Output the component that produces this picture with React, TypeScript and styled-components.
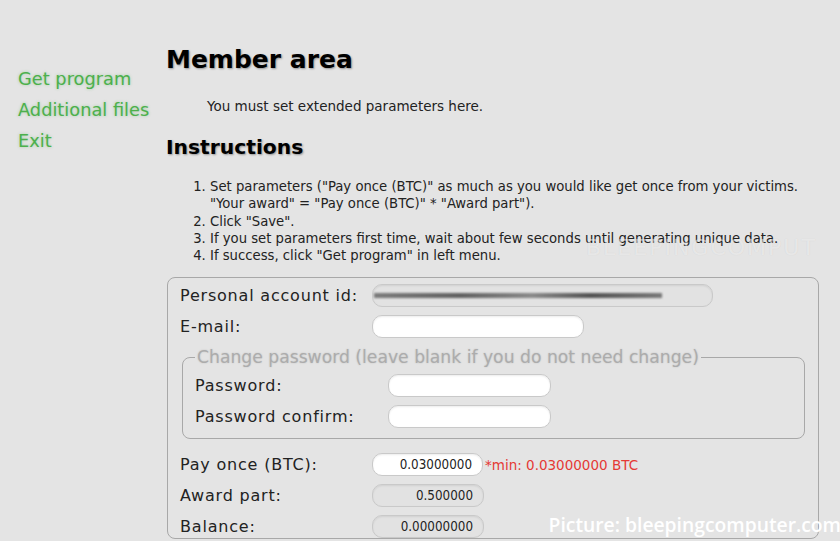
import styled, { createGlobalStyle } from 'styled-components';

const GlobalStyle = createGlobalStyle`
  html, body {
    margin: 0;
    padding: 0;
    background: #e4e4e4;
  }
  body {
    font-family: "DejaVu Sans Condensed", "DejaVu Sans", sans-serif;
    color: #222;
    width: 840px;
    height: 541px;
    overflow: hidden;
  }
`;

const Page = styled.div`
  position: relative;
  display: flex;
  width: 840px;
  height: 541px;
  overflow: hidden;
`;

const Sidebar = styled.nav`
  width: 166px;
  flex: none;
  padding: 63px 0 0 18px;
  box-sizing: border-box;
  display: flex;
  flex-direction: column;
`;

const MenuLink = styled.a`
  font-family: "DejaVu Sans", sans-serif;
  font-size: 17.8px;
  line-height: 31px;
  color: #4cb04c;
  text-decoration: none;
  text-shadow: 0 0 3px rgba(80, 170, 80, 0.45);
  white-space: nowrap;
`;

const Main = styled.main`
  flex: 1;
  padding-top: 42px;
`;

const Title = styled.h1`
  margin: 0;
  font-family: "DejaVu Sans", sans-serif;
  font-size: 25px;
  line-height: 36px;
  font-weight: bold;
  color: #000;
  text-shadow: 1px 1px 2px rgba(0, 0, 0, 0.35);
`;

const Notice = styled.p`
  margin: 19px 0 0 41px;
  font-family: "DejaVu Sans", sans-serif;
  font-size: 13.5px;
  line-height: 18px;
  color: #222;
`;

const Subtitle = styled.h2`
  margin: 18px 0 0;
  font-family: "DejaVu Sans", sans-serif;
  font-size: 20.3px;
  line-height: 28px;
  font-weight: bold;
  color: #000;
  text-shadow: 1px 1px 2px rgba(0, 0, 0, 0.35);
`;

const Steps = styled.ol`
  margin: 16px 0 0;
  padding-left: 44px;
  font-size: 14.7px;
  line-height: 17.3px;
  color: #222;
  width: 640px;
`;

const Form = styled.fieldset`
  margin: 14px 0 0 1px;
  width: 652px;
  box-sizing: border-box;
  border: 1px solid #a8a8a8;
  border-radius: 8px;
  padding: 6px 12px 0;
  display: flex;
  flex-direction: column;
  gap: 8px;
`;

const Row = styled.div<{ $col?: number }>`
  display: grid;
  grid-template-columns: ${(p) => p.$col || 192}px 1fr;
  height: 23px;
  align-items: center;
`;

const InnerSet = styled.fieldset`
  margin: 1px 1px 6px 2px;
  min-width: 0;
  border: 1px solid #a8a8a8;
  border-radius: 8px;
  padding: 7px 12px 10px;
  display: flex;
  flex-direction: column;
  gap: 8px;
`;

const Legend = styled.legend`
  padding: 0 2px;
  font-family: "DejaVu Sans", sans-serif;
  font-size: 17.2px;
  line-height: 20px;
  color: #acacac;
  text-shadow: 0 0 2px rgba(0, 0, 0, 0.15);
  white-space: nowrap;
`;

const Label = styled.label`
  font-family: "DejaVu Sans", sans-serif;
  font-size: 16px;
  letter-spacing: 0.8px;
  color: #222;
  white-space: nowrap;
`;

const Field = styled.div`
  display: flex;
  align-items: center;
  gap: 2px;
`;

const Box = styled.div<{ $w: number; $readonly?: boolean; $align?: string }>`
  position: relative;
  flex: none;
  width: ${(p) => p.$w}px;
  height: 23px;
  box-sizing: border-box;
  border: 1px solid #c9c9c9;
  border-radius: 10px;
  background: ${(p) => (p.$readonly ? '#e2e2e2' : '#fff')};
  box-shadow: inset 0 1px 2px rgba(0, 0, 0, 0.08);
  display: flex;
  align-items: center;
  justify-content: ${(p) => p.$align || 'flex-start'};
  padding: 0 10px;
  font-size: 13.3px;
  color: #222;
  overflow: hidden;
`;

const Smudge = styled.span`
  display: block;
  flex: none;
  width: 288px;
  height: 5px;
  margin-left: -9px;
  background: linear-gradient(90deg, #6a6a6a, #4a4a4a 30%, #7a7a7a 55%, #3a3a3a 75%, #666);
  filter: blur(1.2px);
  opacity: 0.85;
`;

const Hint = styled.span`
  font-family: "DejaVu Sans", sans-serif;
  font-size: 13.5px;
  color: #e53935;
  white-space: nowrap;
`;

const Watermark = styled.div`
  position: absolute;
  right: -1px;
  bottom: 3px;
  font-family: "Open Sans", sans-serif;
  font-weight: 600;
  font-size: 19.3px;
  color: #fff;
  white-space: nowrap;
`;

const FaintMark = styled.div`
  position: absolute;
  left: 586px;
  top: 236px;
  font-family: "DejaVu Sans", sans-serif;
  font-size: 22px;
  line-height: 24px;
  letter-spacing: 2px;
  color: rgba(255, 255, 255, 0.5);
  text-shadow: 0 0 1px rgba(0, 0, 0, 0.1);
  white-space: nowrap;
`;

export default function App() {
  return (
    <>
      <GlobalStyle />
      <Page>
        <Sidebar>
          <MenuLink href="#">Get program</MenuLink>
          <MenuLink href="#">Additional files</MenuLink>
          <MenuLink href="#">Exit</MenuLink>
        </Sidebar>
        <Main>
          <Title>Member area</Title>
          <Notice>You must set extended parameters here.</Notice>
          <Subtitle>Instructions</Subtitle>
          <Steps>
            <li>
              Set parameters ("Pay once (BTC)" as much as you would like get once from your victims.
              <br />
              "Your award" = "Pay once (BTC)" * "Award part").
            </li>
            <li>Click "Save".</li>
            <li>If you set parameters first time, wait about few seconds until generating unique data.</li>
            <li>If success, click "Get program" in left menu.</li>
          </Steps>
          <Form>
            <Row>
              <Label>Personal account id:</Label>
              <Field>
                <Box $w={341} $readonly>
                  <Smudge />
                </Box>
              </Field>
            </Row>
            <Row>
              <Label>E-mail:</Label>
              <Field>
                <Box $w={212} />
              </Field>
            </Row>
            <InnerSet>
              <Legend>Change password (leave blank if you do not need change)</Legend>
              <Row $col={193}>
                <Label>Password:</Label>
                <Field>
                  <Box $w={163} />
                </Field>
              </Row>
              <Row $col={193}>
                <Label>Password confirm:</Label>
                <Field>
                  <Box $w={163} />
                </Field>
              </Row>
            </InnerSet>
            <Row>
              <Label>Pay once (BTC):</Label>
              <Field>
                <Box $w={111} $align="flex-end">0.03000000</Box>
                <Hint>*min: 0.03000000 BTC</Hint>
              </Field>
            </Row>
            <Row>
              <Label>Award part:</Label>
              <Field>
                <Box $w={112} $readonly $align="flex-end">0.500000</Box>
              </Field>
            </Row>
            <Row>
              <Label>Balance:</Label>
              <Field>
                <Box $w={112} $readonly $align="flex-end">0.00000000</Box>
              </Field>
            </Row>
          </Form>
        </Main>
        <FaintMark>BLEEPINGCOMPUT</FaintMark>
        <Watermark>Picture: bleepingcomputer.com</Watermark>
      </Page>
    </>
  );
}
